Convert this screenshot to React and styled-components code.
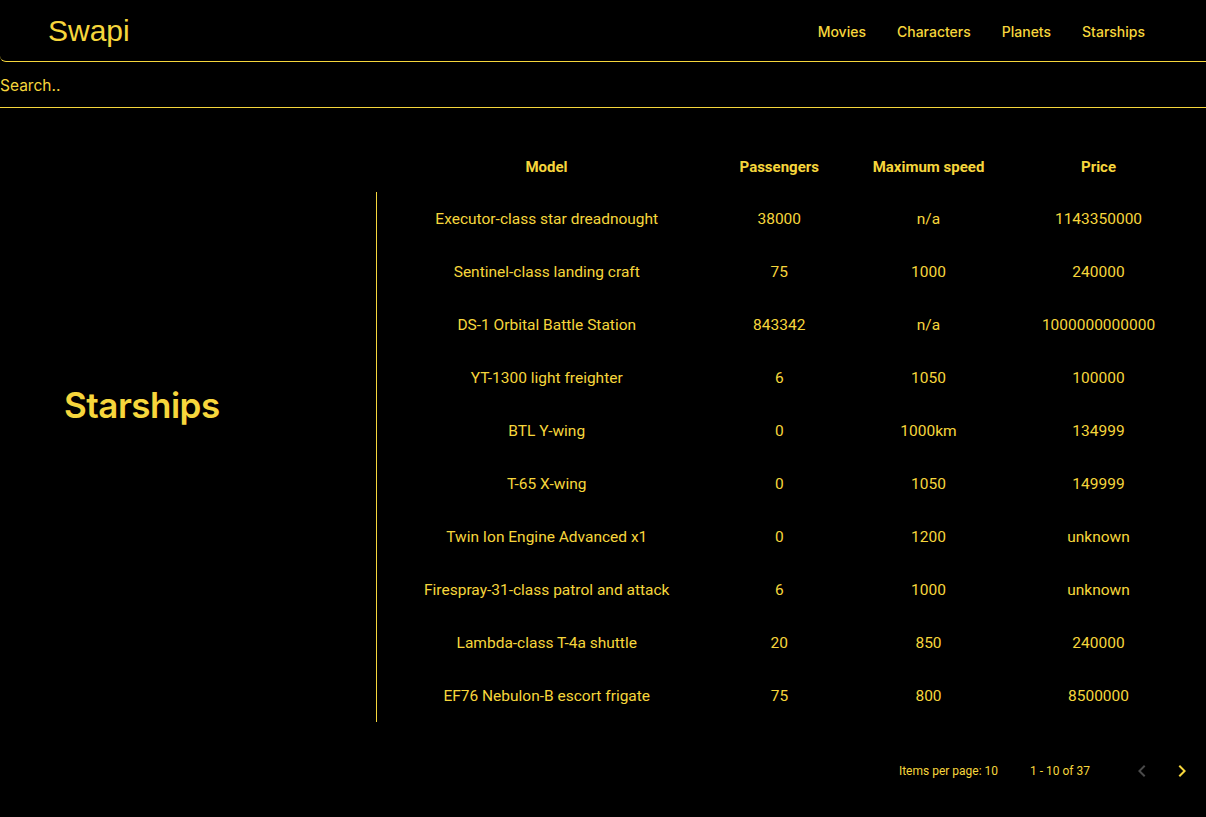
import React from 'react'
import styled, {createGlobalStyle} from 'styled-components'

const YELLOW = '#f6d63c'

const starships = [
    {model: 'Executor-class star dreadnought', passengers: '38000', speed: 'n/a', price: '1143350000'},
    {model: 'Sentinel-class landing craft', passengers: '75', speed: '1000', price: '240000'},
    {model: 'DS-1 Orbital Battle Station', passengers: '843342', speed: 'n/a', price: '1000000000000'},
    {model: 'YT-1300 light freighter', passengers: '6', speed: '1050', price: '100000'},
    {model: 'BTL Y-wing', passengers: '0', speed: '1000km', price: '134999'},
    {model: 'T-65 X-wing', passengers: '0', speed: '1050', price: '149999'},
    {model: 'Twin Ion Engine Advanced x1', passengers: '0', speed: '1200', price: 'unknown'},
    {model: 'Firespray-31-class patrol and attack', passengers: '6', speed: '1000', price: 'unknown'},
    {model: 'Lambda-class T-4a shuttle', passengers: '20', speed: '850', price: '240000'},
    {model: 'EF76 Nebulon-B escort frigate', passengers: '75', speed: '800', price: '8500000'},
]

const Chevron = ({dir, color}) => (
    <svg width="24" height="24" viewBox="0 0 24 24">
        <path
            d={dir === 'left' ? 'M15.41 7.41 14 6l-6 6 6 6 1.41-1.41L10.83 12z' : 'M10 6 8.59 7.41 13.17 12l-4.58 4.59L10 18l6-6z'}
            fill={color}
        />
    </svg>
)

const App = () => {
    return (
    <Page>
        <GlobalStyle/>
        <Header>
            <Logo>Swapi</Logo>
            <Nav>
                <NavLink>Movies</NavLink>
                <NavLink>Characters</NavLink>
                <NavLink>Planets</NavLink>
                <NavLink>Starships</NavLink>
            </Nav>
        </Header>
        <SearchInput placeholder="Search.."/>
        <Main>
            <Side>
                <Heading>Starships</Heading>
            </Side>
            <TableWrap>
                <Table>
                    <colgroup>
                        <col style={{width: 340}}/>
                        <col style={{width: 126}}/>
                        <col style={{width: 172}}/>
                        <col style={{width: 168}}/>
                    </colgroup>
                    <thead>
                        <tr>
                            <Th>Model</Th>
                            <Th>Passengers</Th>
                            <Th>Maximum speed</Th>
                            <Th>Price</Th>
                        </tr>
                    </thead>
                    <tbody>
                        {starships.map((ship, index) => (
                            <tr key={index}>
                                <Td first>{ship.model}</Td>
                                <Td>{ship.passengers}</Td>
                                <Td>{ship.speed}</Td>
                                <Td>{ship.price}</Td>
                            </tr>
                        ))}
                    </tbody>
                </Table>
                <Paginator>
                    <PageLabel>Items per page: 10</PageLabel>
                    <RangeLabel>1 - 10 of 37</RangeLabel>
                    <PageButton><Chevron dir="left" color="#4a4a4a"/></PageButton>
                    <PageButton><Chevron dir="right" color={YELLOW}/></PageButton>
                </Paginator>
            </TableWrap>
        </Main>
    </Page>
    )
}

const GlobalStyle = createGlobalStyle`
    html, body {
        margin: 0;
        background: #000000;
    }
    body {
        font-family: Roboto, "Noto Sans", sans-serif;
        color: ${YELLOW};
    }
`

const Page = styled.div`
    width: 1206px;
    min-height: 817px;
    background: #000000;
    overflow: hidden;
`

const Header = styled.header`
    display: flex;
    align-items: center;
    justify-content: space-between;
    box-sizing: border-box;
    height: 62px;
    padding: 2px 61px 0 48px;
    border-bottom: 1px solid ${YELLOW};
    border-bottom-left-radius: 6px;
`

const Logo = styled.div`
    font-family: "Liberation Sans", Arial, sans-serif;
    font-size: 30px;
    color: ${YELLOW};
    padding-bottom: 1px;
`

const Nav = styled.nav`
    display: flex;
    gap: 31px;
`

const NavLink = styled.a`
    font-family: Inter, Roboto, sans-serif;
    font-size: 14px;
    font-weight: 500;
    color: ${YELLOW};
    cursor: pointer;
`

const SearchInput = styled.input`
    display: block;
    box-sizing: border-box;
    width: 100%;
    height: 46px;
    margin: 0;
    padding: 2px 0 0 0;
    background: #000000;
    border: none;
    border-bottom: 1px solid ${YELLOW};
    outline: none;
    font-family: Inter, Roboto, sans-serif;
    font-size: 15.5px;
    color: ${YELLOW};
    &::placeholder {
        color: ${YELLOW};
        opacity: 1;
    }
`

const Main = styled.main`
    display: flex;
    padding-top: 33px;
`

const Side = styled.div`
    width: 376px;
    flex: none;
    padding: 243px 0 0 64px;
    box-sizing: border-box;
`

const Heading = styled.h1`
    margin: 0;
    font-family: Inter, Roboto, sans-serif;
    font-size: 35px;
    font-weight: 600;
    letter-spacing: -0.5px;
    color: ${YELLOW};
`

const TableWrap = styled.div`
    width: 806px;
`

const Table = styled.table`
    border-collapse: collapse;
    table-layout: fixed;
    width: 806px;
`

const Th = styled.th`
    height: 51px;
    padding: 0;
    font-size: 15px;
    font-weight: 700;
    text-align: center;
    vertical-align: middle;
    color: ${YELLOW};
`

const Td = styled.td`
    height: 53px;
    padding: 0;
    font-size: 15.5px;
    text-align: center;
    color: ${YELLOW};
    border-left: ${props => props.first ? `1px solid ${YELLOW}` : 'none'};
`

const Paginator = styled.div`
    display: flex;
    align-items: center;
    justify-content: flex-end;
    height: 56px;
    margin-top: 21px;
    margin-right: -20px;
    font-size: 12px;
`

const PageLabel = styled.span`
    margin-right: 32px;
`

const RangeLabel = styled.span`
    margin-right: 32px;
`

const PageButton = styled.button`
    display: flex;
    align-items: center;
    justify-content: center;
    width: 40px;
    height: 40px;
    padding: 0;
    background: none;
    border: none;
    cursor: pointer;
`

export default App
